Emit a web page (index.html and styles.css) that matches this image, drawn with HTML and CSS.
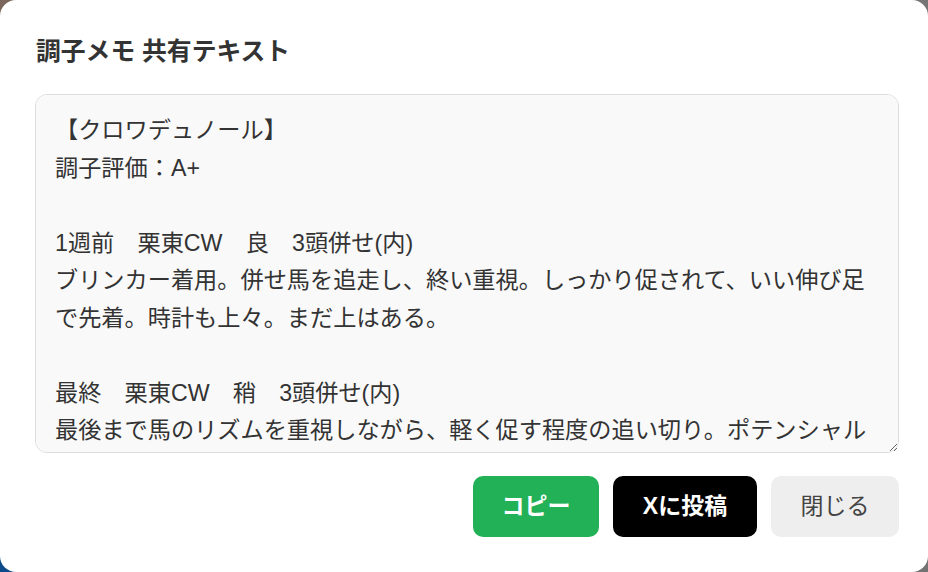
FILE: index.html
```html
<!DOCTYPE html>
<html lang="ja">
<head>
<meta charset="utf-8">
<title>調子メモ 共有テキスト</title>
<link rel="stylesheet" href="styles.css">
</head>
<body>
<div class="backdrop">
  <div class="modal" role="dialog" aria-labelledby="modal-title">
    <h2 class="modal-title" id="modal-title">調子メモ 共有テキスト</h2>
    <textarea class="share-text" readonly>【クロワデュノール】
調子評価：A+

1週前　栗東CW　良　3頭併せ(内)
ブリンカー着用。併せ馬を追走し、終い重視。しっかり促されて、いい伸び足で先着。時計も上々。まだ上はある。

最終　栗東CW　稍　3頭併せ(内)
最後まで馬のリズムを重視しながら、軽く促す程度の追い切り。ポテンシャル</textarea>
    <div class="actions">
      <button class="btn btn-copy" type="button">コピー</button>
      <button class="btn btn-x" type="button">Xに投稿</button>
      <button class="btn btn-close" type="button">閉じる</button>
    </div>
  </div>
</div>
</body>
</html>
```
FILE: styles.css
```css
* { box-sizing: border-box; }

html, body {
  margin: 0;
  padding: 0;
  height: 100%;
}

body {
  font-family: "Liberation Sans", "Noto Sans CJK JP", sans-serif;
  color: #333;
}

.backdrop {
  height: 100%;
  background:
    linear-gradient(to right, #7a665a 0 50%, #757575 50% 100%) top / 100% 50% no-repeat,
    linear-gradient(to right, #0c4a8a 0 50%, #737373 50% 100%) bottom / 100% 50% no-repeat;
}

.modal {
  height: 100%;
  background: #fff;
  border-radius: 16px;
  padding: 34px 29px 35px 35px;
  display: flex;
  flex-direction: column;
}

.modal-title {
  margin: 0 0 24px 1px;
  font-size: 24.8px;
  line-height: 36px;
  font-weight: 700;
  color: #333;
}

.share-text {
  display: block;
  width: 100%;
  height: 359px;
  margin: 0;
  padding: 17px 19px;
  border: 1px solid #dcdcdc;
  border-radius: 12px;
  background: #f9f9f9;
  color: #333;
  font-family: "Liberation Sans", "Noto Sans CJK JP", sans-serif;
  font-size: 23.2px;
  line-height: 37.5px;
  resize: vertical;
  overflow: auto;
  scrollbar-width: none;
}

.actions {
  display: flex;
  justify-content: flex-end;
  gap: 14px;
  margin-top: 23px;
}

.btn {
  height: 61px;
  padding: 0;
  border: none;
  border-radius: 10px;
  font-family: "Liberation Sans", "Noto Sans CJK JP", sans-serif;
  font-size: 23px;
  line-height: 1;
  white-space: nowrap;
  text-align: center;
  cursor: pointer;
}

.btn-copy {
  background: #22b157;
  color: #fff;
  font-weight: 700;
  width: 126px;
}

.btn-x {
  background: #000;
  color: #fff;
  font-weight: 700;
  width: 144px;
}

.btn-close {
  background: #eeeeee;
  color: #444;
  font-weight: 400;
  width: 128px;
}
```
